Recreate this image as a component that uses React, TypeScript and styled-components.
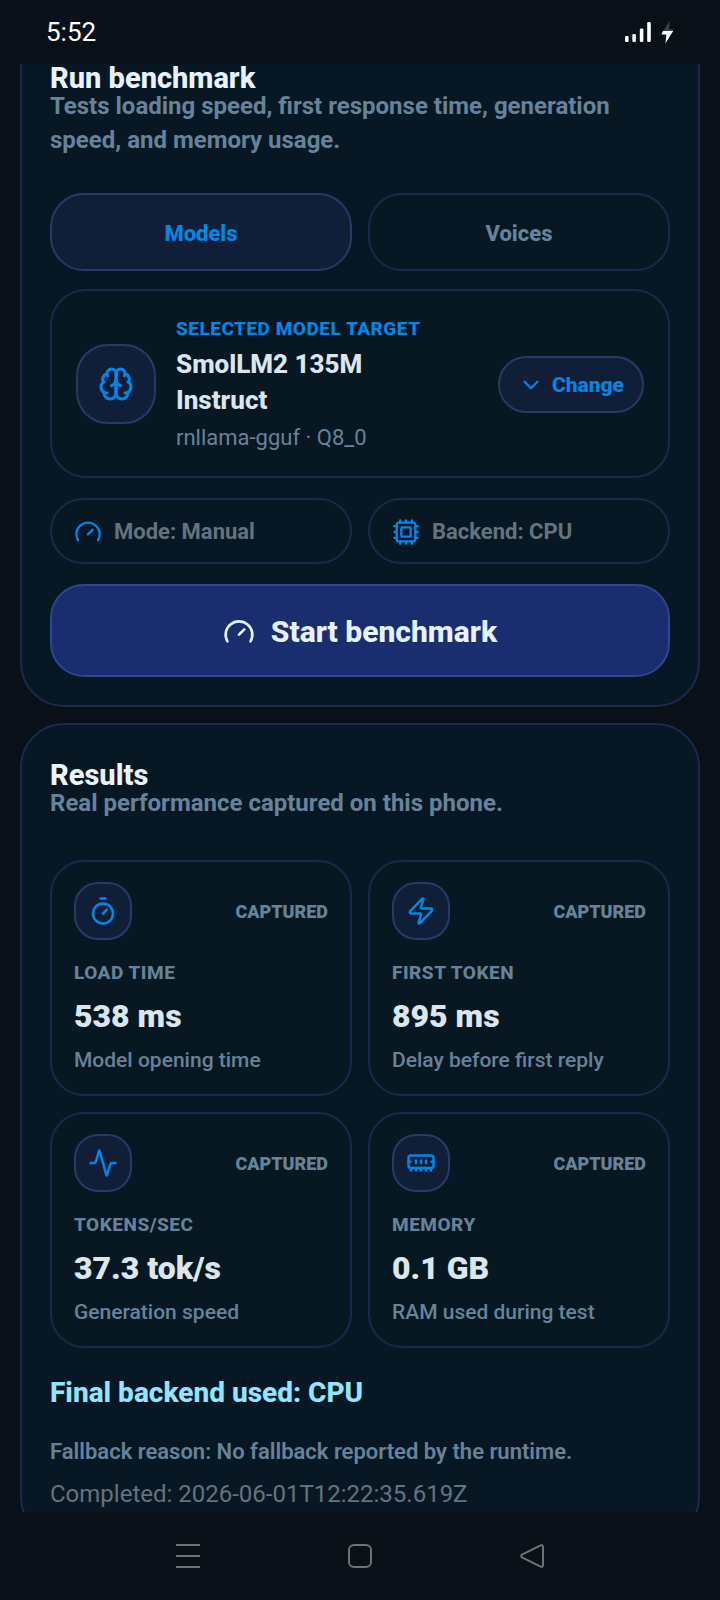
import React, { useState } from "react";
import styled, { createGlobalStyle } from "styled-components";
import {
  Activity,
  ChevronDown,
  Cpu,
  Gauge,
  MemoryStick,
  Timer,
  Zap,
  type LucideIcon,
} from "lucide-react";

const color = {
  page: "#0a1018",
  card: "#071824",
  line: "#1a294d",
  raised: "#101f37",
  raisedLine: "#273a68",
  accent: "#0087e8",
  muted: "#67839b",
  dim: "#65737f",
  title: "#eaf3fc",
  value: "#dce6ef",
};

const GlobalStyle = createGlobalStyle`
  *, *::before, *::after { box-sizing: border-box; }
  body {
    margin: 0;
    background: ${color.page};
    color: ${color.value};
    font-family: Roboto, "Liberation Sans", sans-serif;
  }
  h1, h2, p { margin: 0; }
  button { font-family: inherit; cursor: pointer; margin: 0; }
  svg { display: block; flex: none; }
`;

const Screen = styled.div`
  height: 100vh;
  display: flex;
  flex-direction: column;
`;

const StatusBar = styled.header`
  flex: none;
  height: 64px;
  padding: 0 46px;
  display: flex;
  align-items: center;
  justify-content: space-between;
  color: #ffffff;
  font-size: 26px;
  line-height: 32px;
`;

const StatusIcons = styled.div`
  display: flex;
  align-items: center;
  gap: 10px;
`;

const Scroller = styled.main`
  flex: 1;
  min-height: 0;
  overflow: hidden;
  padding: 0 20px;
`;

/* The feed is scrolled a little past the top of the first card. */
const Feed = styled.div`
  margin-top: -38px;
  display: flex;
  flex-direction: column;
  gap: 16px;
`;

const Card = styled.section`
  padding: 36px 28px 28px;
  border: 2px solid ${color.line};
  border-radius: 44px;
  background: ${color.card};
`;

const CardTitle = styled.h2`
  font-size: 29px;
  line-height: 28px;
  margin-bottom: -3px;
  font-weight: 800;
  color: ${color.title};
`;

const CardSubtitle = styled.p`
  font-size: 24px;
  line-height: 34px;
  font-weight: 700;
  color: ${color.muted};
`;

const Columns = styled.div<{ $top: number }>`
  margin-top: ${(p) => p.$top}px;
  display: grid;
  grid-template-columns: 1fr 1fr;
  gap: 16px;
`;

const Tab = styled.button<{ $active: boolean }>`
  height: 78px;
  padding: 4px 0 0;
  border: 2px solid ${(p) => (p.$active ? color.raisedLine : color.line)};
  border-radius: 34px;
  background: ${(p) => (p.$active ? color.raised : "transparent")};
  color: ${(p) => (p.$active ? color.accent : color.muted)};
  font-size: 22px;
  line-height: 30px;
  font-weight: 800;
`;

const Target = styled.div`
  margin-top: 18px;
  padding: 25px 24px 24px;
  display: flex;
  align-items: center;
  gap: 20px;
  border: 2px solid ${color.line};
  border-radius: 36px;
  background: #071822;
`;

const IconBox = styled.div<{ $size: number; $radius: number }>`
  flex: none;
  width: ${(p) => p.$size}px;
  height: ${(p) => p.$size}px;
  display: flex;
  align-items: center;
  justify-content: center;
  border: 2px solid ${color.raisedLine};
  border-radius: ${(p) => p.$radius}px;
  background: ${color.raised};
  color: ${color.accent};
`;

const TargetText = styled.div`
  flex: 1;
  min-width: 0;
`;

const Eyebrow = styled.p<{ $accent?: boolean }>`
  font-size: 19px;
  line-height: 26px;
  font-weight: 800;
  letter-spacing: 0.5px;
  text-transform: uppercase;
  color: ${(p) => (p.$accent ? color.accent : color.muted)};
`;

const TargetName = styled.p`
  margin: 4px 0 6px;
  font-size: 26px;
  line-height: 36px;
  font-weight: 800;
`;

const Detail = styled.p<{ $size: number; $weight: number }>`
  font-size: ${(p) => p.$size}px;
  line-height: 28px;
  font-weight: ${(p) => p.$weight};
  color: ${color.muted};
`;

const ChangeButton = styled.button`
  flex: none;
  height: 57px;
  padding: 2px 18px 0;
  display: flex;
  align-items: center;
  gap: 8px;
  border: 2px solid ${color.raisedLine};
  border-radius: 29px;
  background: ${color.raised};
  color: ${color.accent};
  font-size: 21px;
  line-height: 30px;
  font-weight: 800;
`;

const Chip = styled.div`
  height: 66px;
  padding: 2px 22px 0;
  display: flex;
  align-items: center;
  gap: 12px;
  border: 2px solid ${color.line};
  border-radius: 33px;
  color: ${color.dim};
  font-size: 22px;
  line-height: 30px;
  font-weight: 700;

  svg { color: ${color.accent}; }
`;

const StartButton = styled.button`
  width: 100%;
  height: 93px;
  margin-top: 20px;
  padding: 2px 0 0;
  display: flex;
  align-items: center;
  justify-content: center;
  gap: 16px;
  border: 2px solid #2e478f;
  border-radius: 34px;
  background: #1a2d6f;
  color: #e6f2ff;
  font-size: 30px;
  line-height: 36px;
  font-weight: 800;
`;

const Metric = styled.article`
  padding: 20px 22px;
  border: 2px solid ${color.line};
  border-radius: 34px;
  background: #071822;
`;

const MetricTop = styled.div`
  margin-bottom: 20px;
  display: flex;
  align-items: center;
  justify-content: space-between;
`;

const MetricState = styled.span`
  padding-top: 2px;
  font-size: 18px;
  line-height: 24px;
  font-weight: 900;
  color: ${color.muted};
`;

const MetricValue = styled.p`
  margin: 10px 0;
  font-size: 32px;
  line-height: 40px;
  font-weight: 900;
`;

const FinalBackend = styled.p`
  margin-top: 27px;
  font-size: 28px;
  line-height: 36px;
  font-weight: 800;
  color: #93e5ff;
`;

const Fallback = styled.p`
  margin-top: 26px;
  font-size: 22px;
  line-height: 30px;
  font-weight: 600;
  color: ${color.muted};
`;

const Completed = styled.p`
  margin-top: 10px;
  font-size: 24px;
  line-height: 34px;
  color: ${color.dim};
`;

const NavBar = styled.nav`
  flex: none;
  height: 88px;
  display: flex;
  align-items: center;
  justify-content: center;
  gap: 132px;
`;

const NavButton = styled.button`
  width: 40px;
  height: 40px;
  padding: 0;
  display: flex;
  align-items: center;
  justify-content: center;
  border: 0;
  background: none;
  color: #707376;
`;

function BrainIcon() {
  return (
    <svg
      width="36"
      height="36"
      viewBox="0 0 24 24"
      fill="none"
      stroke="currentColor"
      strokeWidth="2"
      strokeLinecap="round"
      strokeLinejoin="round"
      aria-hidden="true"
    >
      <path d="M12 5a3 3 0 1 0-5.997.125 4 4 0 0 0-2.526 5.77 4 4 0 0 0 .556 6.588A4 4 0 1 0 12 18Z" />
      <path d="M12 5a3 3 0 1 1 5.997.125 4 4 0 0 1 2.526 5.77 4 4 0 0 1-.556 6.588A4 4 0 1 1 12 18Z" />
      <path d="M15 13a4.5 4.5 0 0 1-3-4 4.5 4.5 0 0 1-3 4" />
      <path d="M17.599 6.5a3 3 0 0 0 .399-1.375" />
      <path d="M6.003 5.125A3 3 0 0 0 6.401 6.5" />
      <path d="M3.477 10.896a4 4 0 0 1 .585-.396" />
      <path d="M19.938 10.5a4 4 0 0 1 .585.396" />
      <path d="M6 18a4 4 0 0 1-1.967-.516" />
      <path d="M19.967 17.484A4 4 0 0 1 18 18" />
    </svg>
  );
}

type MetricInfo = { icon: LucideIcon; label: string; value: string; detail: string };

const metrics: MetricInfo[] = [
  { icon: Timer, label: "Load time", value: "538 ms", detail: "Model opening time" },
  { icon: Zap, label: "First token", value: "895 ms", detail: "Delay before first reply" },
  { icon: Activity, label: "Tokens/sec", value: "37.3 tok/s", detail: "Generation speed" },
  { icon: MemoryStick, label: "Memory", value: "0.1 GB", detail: "RAM used during test" },
];

const tabs = ["Models", "Voices"];

export default function App() {
  const [tab, setTab] = useState("Models");

  return (
    <Screen>
      <GlobalStyle />
      <StatusBar>
        <time>5:52</time>
        <StatusIcons>
          <svg width="26" height="22" viewBox="0 0 26 22" fill="currentColor" aria-label="Signal">
            <rect x="0" y="15" width="3.6" height="6" rx="1.2" />
            <rect x="7.3" y="13" width="3.6" height="8" rx="1.2" />
            <rect x="14.8" y="7.6" width="3.6" height="13.4" rx="1.2" />
            <rect x="22.2" y="1" width="3.6" height="20" rx="1.2" />
          </svg>
          <svg width="13" height="24" viewBox="0 0 13 24" aria-label="Charging">
            <path d="M8.8 0.6 L2.4 11 H12 L12.8 9.2 H8 Z" fill="#3b4047" />
            <path d="M2 11 H12.2 L4.4 23.4 L5.4 14.6 H0.4 Z" fill="#ffffff" />
          </svg>
        </StatusIcons>
      </StatusBar>

      <Scroller>
        <Feed>
          <Card>
            <CardTitle>Run benchmark</CardTitle>
            <CardSubtitle>
              Tests loading speed, first response time, generation speed, and memory usage.
            </CardSubtitle>

            <Columns $top={36} role="tablist">
              {tabs.map((name) => (
                <Tab
                  key={name}
                  type="button"
                  role="tab"
                  aria-selected={tab === name}
                  $active={tab === name}
                  onClick={() => setTab(name)}
                >
                  {name}
                </Tab>
              ))}
            </Columns>

            <Target>
              <IconBox $size={80} $radius={32}>
                <BrainIcon />
              </IconBox>
              <TargetText>
                <Eyebrow $accent>Selected model target</Eyebrow>
                <TargetName>
                  SmolLM2 135M
                  <br />
                  Instruct
                </TargetName>
                <Detail $size={22} $weight={400}>
                  rnllama-gguf · Q8_0
                </Detail>
              </TargetText>
              <ChangeButton type="button">
                <ChevronDown size={26} />
                Change
              </ChangeButton>
            </Target>

            <Columns $top={20}>
              <Chip>
                <Gauge size={28} />
                Mode: Manual
              </Chip>
              <Chip>
                <Cpu size={28} />
                Backend: CPU
              </Chip>
            </Columns>

            <StartButton type="button">
              <Gauge size={32} />
              Start benchmark
            </StartButton>
          </Card>

          <Card>
            <CardTitle>Results</CardTitle>
            <CardSubtitle>Real performance captured on this phone.</CardSubtitle>

            <Columns $top={40}>
              {metrics.map(({ icon: Icon, label, value, detail }) => (
                <Metric key={label}>
                  <MetricTop>
                    <IconBox $size={58} $radius={24}>
                      <Icon size={30} />
                    </IconBox>
                    <MetricState>CAPTURED</MetricState>
                  </MetricTop>
                  <Eyebrow>{label}</Eyebrow>
                  <MetricValue>{value}</MetricValue>
                  <Detail $size={21} $weight={500}>
                    {detail}
                  </Detail>
                </Metric>
              ))}
            </Columns>

            <FinalBackend>Final backend used: CPU</FinalBackend>
            <Fallback>Fallback reason: No fallback reported by the runtime.</Fallback>
            <Completed>Completed: 2026-06-01T12:22:35.619Z</Completed>
          </Card>
        </Feed>
      </Scroller>

      <NavBar aria-label="System navigation">
        <NavButton type="button" aria-label="Recent apps">
          <svg width="24" height="24" viewBox="0 0 24 24" stroke="currentColor" strokeWidth="2">
            <path d="M0 1H24M0 12H24M0 23H24" />
          </svg>
        </NavButton>
        <NavButton type="button" aria-label="Home">
          <svg width="24" height="24" viewBox="0 0 24 24" fill="none" stroke="currentColor" strokeWidth="2">
            <rect x="1" y="1" width="22" height="22" rx="5" />
          </svg>
        </NavButton>
        <NavButton type="button" aria-label="Back">
          <svg width="24" height="24" viewBox="0 0 24 24" fill="none" stroke="currentColor" strokeWidth="2" strokeLinejoin="round">
            <path d="M20.6 1.4 L1.9 10.6 Q0.4 12 1.9 13.4 L20.6 22.6 Q23 23.4 23 21 V3 Q23 0.6 20.6 1.4 Z" />
          </svg>
        </NavButton>
      </NavBar>
    </Screen>
  );
}
